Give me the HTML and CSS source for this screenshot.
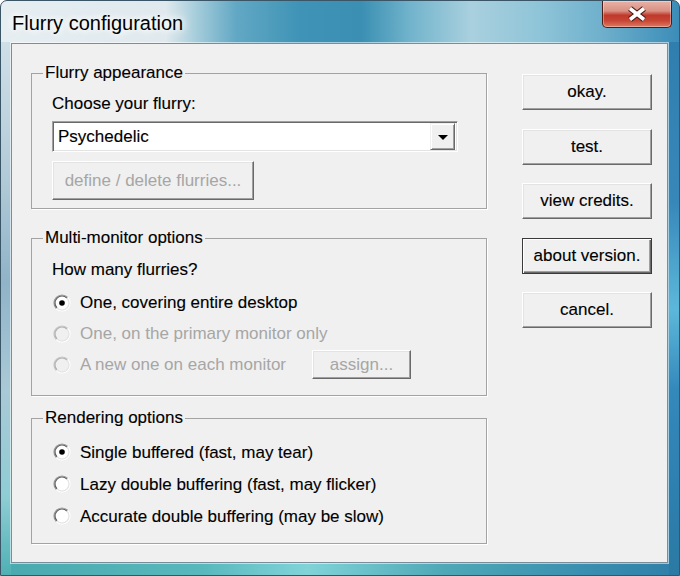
FILE: index.html
```html
<!DOCTYPE html>
<html>
<head>
<meta charset="utf-8">
<title>Flurry configuration</title>
<link rel="stylesheet" href="styles.css">
</head>
<body>
<div class="window">
  <div class="titlebar">
    <span class="title">Flurry configuration</span>
    <div class="close">
      <svg width="24" height="18" viewBox="0 0 24 18">
        <path class="x-shadow" d="M5 3.5 L19 14.5 M19 3.5 L5 14.5"/>
        <path class="x-glyph" d="M5 3.5 L19 14.5 M19 3.5 L5 14.5"/>
      </svg>
    </div>
  </div>
  <div class="client">
    <div class="left">
      <div class="group g1">
        <div class="group-title">Flurry appearance</div>
        <div class="label">Choose your flurry:</div>
        <div class="combo">
          <span class="combo-text">Psychedelic</span>
          <span class="combo-btn"><span class="tri"></span></span>
        </div>
        <div class="btn disabled btn-define">define / delete flurries...</div>
      </div>

      <div class="group g2">
        <div class="group-title">Multi-monitor options</div>
        <div class="label label2">How many flurries?</div>
        <div class="rows rows2">
          <div class="row">
            <svg class="radio" width="18" height="18" viewBox="0 0 18 18"><circle class="fill" cx="9" cy="9" r="7"/><path class="o1" d="M3.343 14.657A8 8 0 0 1 14.657 3.343"/><path class="o2" d="M14.657 3.343A8 8 0 0 1 3.343 14.657"/><path class="i1" d="M4.05 13.95A7 7 0 0 1 13.95 4.05"/><path class="i2" d="M13.95 4.05A7 7 0 0 1 4.05 13.95"/><circle class="dot" cx="9" cy="9" r="2.8"/></svg>
            <span class="rlabel">One, covering entire desktop</span>
          </div>
          <div class="row dis">
            <svg class="radio" width="18" height="18" viewBox="0 0 18 18"><circle class="fill" cx="9" cy="9" r="7"/><path class="o1" d="M3.343 14.657A8 8 0 0 1 14.657 3.343"/><path class="o2" d="M14.657 3.343A8 8 0 0 1 3.343 14.657"/><path class="i1" d="M4.05 13.95A7 7 0 0 1 13.95 4.05"/><path class="i2" d="M13.95 4.05A7 7 0 0 1 4.05 13.95"/></svg>
            <span class="rlabel">One, on the primary monitor only</span>
          </div>
          <div class="row dis">
            <svg class="radio" width="18" height="18" viewBox="0 0 18 18"><circle class="fill" cx="9" cy="9" r="7"/><path class="o1" d="M3.343 14.657A8 8 0 0 1 14.657 3.343"/><path class="o2" d="M14.657 3.343A8 8 0 0 1 3.343 14.657"/><path class="i1" d="M4.05 13.95A7 7 0 0 1 13.95 4.05"/><path class="i2" d="M13.95 4.05A7 7 0 0 1 4.05 13.95"/></svg>
            <span class="rlabel fixed">A new one on each monitor</span>
            <div class="btn disabled btn-assign">assign...</div>
          </div>
        </div>
      </div>

      <div class="group g3">
        <div class="group-title">Rendering options</div>
        <div class="rows rows3">
          <div class="row">
            <svg class="radio" width="18" height="18" viewBox="0 0 18 18"><circle class="fill" cx="9" cy="9" r="7"/><path class="o1" d="M3.343 14.657A8 8 0 0 1 14.657 3.343"/><path class="o2" d="M14.657 3.343A8 8 0 0 1 3.343 14.657"/><path class="i1" d="M4.05 13.95A7 7 0 0 1 13.95 4.05"/><path class="i2" d="M13.95 4.05A7 7 0 0 1 4.05 13.95"/><circle class="dot" cx="9" cy="9" r="2.8"/></svg>
            <span class="rlabel">Single buffered (fast, may tear)</span>
          </div>
          <div class="row">
            <svg class="radio" width="18" height="18" viewBox="0 0 18 18"><circle class="fill" cx="9" cy="9" r="7"/><path class="o1" d="M3.343 14.657A8 8 0 0 1 14.657 3.343"/><path class="o2" d="M14.657 3.343A8 8 0 0 1 3.343 14.657"/><path class="i1" d="M4.05 13.95A7 7 0 0 1 13.95 4.05"/><path class="i2" d="M13.95 4.05A7 7 0 0 1 4.05 13.95"/></svg>
            <span class="rlabel">Lazy double buffering (fast, may flicker)</span>
          </div>
          <div class="row">
            <svg class="radio" width="18" height="18" viewBox="0 0 18 18"><circle class="fill" cx="9" cy="9" r="7"/><path class="o1" d="M3.343 14.657A8 8 0 0 1 14.657 3.343"/><path class="o2" d="M14.657 3.343A8 8 0 0 1 3.343 14.657"/><path class="i1" d="M4.05 13.95A7 7 0 0 1 13.95 4.05"/><path class="i2" d="M13.95 4.05A7 7 0 0 1 4.05 13.95"/></svg>
            <span class="rlabel">Accurate double buffering (may be slow)</span>
          </div>
        </div>
      </div>
    </div>

    <div class="right">
      <div class="btn side">okay.</div>
      <div class="btn side">test.</div>
      <div class="btn side">view credits.</div>
      <div class="btn side default">about version.</div>
      <div class="btn side">cancel.</div>
    </div>
  </div>
</div>
</body>
</html>
```

FILE: styles.css
```css
html, body {
  margin: 0;
  padding: 0;
  background: #ffffff;
}

body {
  font-family: "Liberation Sans", Arial, sans-serif;
  font-size: 17px;
  color: #000;
}

.window {
  width: 680px;
  height: 576px;
  box-sizing: border-box;
  border: 1px solid #3a5566;
  border-radius: 7px 7px 0 0;
  display: flex;
  flex-direction: column;
  overflow: hidden;
  background:
    linear-gradient(180deg, #cfdfe7 0%, #b2cbd8 25%, #8fb3c8 45%, #a9c9d6 65%, #8fcdd4 85%, #4eb0b4 100%) 0 41px / 10px 534px no-repeat,
    linear-gradient(180deg, #2f7eae 0%, #3788b9 30%, #5cb8da 50%, #3489bb 65%, #2d7fae 85%, #2b7aa4 100%) 668px 41px / 10px 534px no-repeat,
    linear-gradient(90deg, #48a9ae 0%, #58b9bd 30%, #80d4d8 45%, #4ea8b6 65%, #3a90b0 85%, #2f7fa8 100%) 0 561px / 680px 14px no-repeat,
    linear-gradient(90deg, #e6eef2 0px, #dfe9ee 165px, #a6cddb 195px, #62a8c4 235px, #3e93b6 300px, #3a8fb3 360px, #72b4cc 410px, #a9d0de 470px, #8ec4d8 540px, #6fb0cc 600px, #3a8cb8 680px);
}

.titlebar {
  height: 42px;
  display: flex;
  align-items: flex-start;
  flex: none;
}

.title {
  margin: 10px 0 0 11px;
  font-size: 20px;
  line-height: 24px;
  color: #000;
  text-shadow: 0 0 6px #ffffff, 0 0 10px #ffffff, 0 0 14px #ffffff;
}

.close {
  margin: 0 7px 0 auto;
  width: 70px;
  height: 27px;
  box-sizing: border-box;
  border: 1px solid #4d1c17;
  border-top: none;
  border-radius: 0 0 5px 5px;
  background: linear-gradient(180deg, #e8b2a8 0%, #d99183 38%, #c0392b 55%, #c64534 75%, #de7a62 100%);
  box-shadow: inset 0 0 0 1px rgba(255, 255, 255, 0.35);
  display: flex;
  align-items: center;
  justify-content: center;
}

.x-shadow {
  fill: none;
  stroke: #4a1a16;
  stroke-width: 6;
}

.x-glyph {
  fill: none;
  stroke: #ffffff;
  stroke-width: 3.6;
}

.client {
  margin: 0 11px 0 10px;
  height: 520px;
  box-sizing: border-box;
  border: 1px solid #7a8d98;
  background: #f0f0f0;
  display: flex;
  flex: none;
  box-shadow: 0 0 0 1px rgba(255, 255, 255, 0.55);
}

.left {
  padding: 29px 0 0 19px;
  width: 456px;
  flex: none;
}

.group {
  border: 1px solid #a3a3a3;
  box-shadow: 1px 1px 0 #ffffff;
}

.g2 {
  margin-top: 29px;
}

.g3 {
  margin-top: 22px;
}

.group-title {
  margin: -11px 0 0 11px;
  padding: 0 2px;
  width: max-content;
  line-height: 20px;
  background: #f0f0f0;
  -webkit-text-stroke: 0.12px #000;
}

.label {
  margin: 11px 0 0 20px;
  line-height: 20px;
  -webkit-text-stroke: 0.12px #000;
}

.label2 {
  margin-top: 12px;
}

.combo {
  margin: 7px 0 0 20px;
  width: 406px;
  height: 31px;
  box-sizing: border-box;
  border: 1px solid;
  border-color: #a0a0a0 #ffffff #ffffff #a0a0a0;
  box-shadow: inset 1px 1px 0 #696969, inset -1px -1px 0 #e3e3e3;
  background: #ffffff;
  display: flex;
  align-items: center;
}

.combo-text {
  padding-left: 5px;
  padding-top: 1px;
  line-height: 20px;
  color: #000;
  -webkit-text-stroke: 0.12px #000;
}

.combo-btn {
  margin: 1px 2px 1px auto;
  width: 25px;
  height: 27px;
  box-sizing: border-box;
  background: #f0f0f0;
  border: 1px solid;
  border-color: #f0f0f0 #696969 #696969 #f0f0f0;
  box-shadow: inset 1px 1px 0 #ffffff, inset -1px -1px 0 #a0a0a0;
  display: flex;
  align-items: center;
  justify-content: center;
}

.tri {
  width: 0;
  height: 0;
  border-left: 5px solid transparent;
  border-right: 5px solid transparent;
  border-top: 5px solid #000;
  margin-top: 1px;
}

.btn {
  box-sizing: border-box;
  background: #f0f0f0;
  border: 1px solid;
  border-color: #ffffff #696969 #696969 #ffffff;
  box-shadow: inset -1px -1px 0 #a0a0a0, inset 1px 1px 0 #e3e3e3;
  display: flex;
  align-items: center;
  justify-content: center;
  line-height: 20px;
  color: #000;
  white-space: nowrap;
  -webkit-text-stroke: 0.12px #000;
}

.btn.disabled {
  color: #a6a6a6;
  -webkit-text-stroke: 0;
}

.btn-define {
  margin: 9px 0 8px 20px;
  width: 202px;
  height: 39px;
}

.btn-assign {
  width: 99px;
  height: 29px;
}

.rows {
  margin-top: 8px;
  padding-left: 21px;
}

.rows2 {
  margin-top: 7px;
  padding-bottom: 15px;
}

.rows2 .row {
  height: 31px;
}

.rows3 {
  padding-bottom: 11px;
}

.rows3 .row {
  height: 32px;
}

.row {
  display: flex;
  align-items: center;
}

.radio {
  flex: none;
  margin-right: 9px;
}

.radio .fill { fill: #ffffff; }
.radio path { fill: none; stroke-width: 1.2; }
.radio .o1 { stroke: #9a9a9a; }
.radio .o2 { stroke: #ffffff; }
.radio .i1 { stroke: #606060; }
.radio .i2 { stroke: #e3e3e3; }
.radio .dot { fill: #000; }

.row.dis .radio .fill { fill: #f0f0f0; }
.row.dis .radio .o1 { stroke: #c4c4c4; }
.row.dis .radio .i1 { stroke: #b0b0b0; }

.rlabel {
  line-height: 20px;
  padding-top: 1px;
  color: #000;
  -webkit-text-stroke: 0.12px #000;
}

.row.dis .rlabel {
  color: #a6a6a6;
  -webkit-text-stroke: 0;
}

.rlabel.fixed {
  width: 232px;
  flex: none;
}

.right {
  margin-left: 35px;
  padding-top: 30px;
  width: 130px;
  flex: none;
  display: flex;
  flex-direction: column;
  gap: 18.5px;
}

.btn.side {
  height: 36px;
}

.btn.default {
  border: 1px solid #3a3a3a;
  box-shadow: inset 1px 1px 0 #ffffff, inset -1px -1px 0 #696969, inset -2px -2px 0 #a0a0a0;
}
```
